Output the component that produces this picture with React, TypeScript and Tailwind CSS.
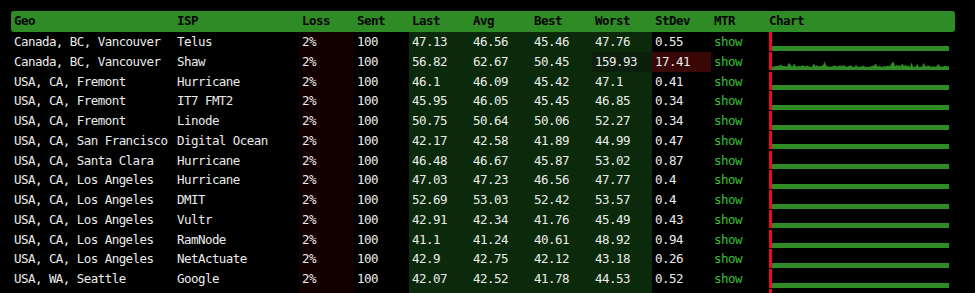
import React from "react";

type Row = {
  geo: string;
  isp: string;
  last: string;
  avg: string;
  best: string;
  worst: string;
  stdev: string;
  spiky?: boolean;
  hidden?: boolean;
};

const rows: Row[] = [
  { geo: "Canada, BC, Vancouver", isp: "Telus", last: "47.13", avg: "46.56", best: "45.46", worst: "47.76", stdev: "0.55" },
  { geo: "Canada, BC, Vancouver", isp: "Shaw", last: "56.82", avg: "62.67", best: "50.45", worst: "159.93", stdev: "17.41", spiky: true },
  { geo: "USA, CA, Fremont", isp: "Hurricane", last: "46.1", avg: "46.09", best: "45.42", worst: "47.1", stdev: "0.41" },
  { geo: "USA, CA, Fremont", isp: "IT7 FMT2", last: "45.95", avg: "46.05", best: "45.45", worst: "46.85", stdev: "0.34" },
  { geo: "USA, CA, Fremont", isp: "Linode", last: "50.75", avg: "50.64", best: "50.06", worst: "52.27", stdev: "0.34" },
  { geo: "USA, CA, San Francisco", isp: "Digital Ocean", last: "42.17", avg: "42.58", best: "41.89", worst: "44.99", stdev: "0.47" },
  { geo: "USA, CA, Santa Clara", isp: "Hurricane", last: "46.48", avg: "46.67", best: "45.87", worst: "53.02", stdev: "0.87" },
  { geo: "USA, CA, Los Angeles", isp: "Hurricane", last: "47.03", avg: "47.23", best: "46.56", worst: "47.77", stdev: "0.4" },
  { geo: "USA, CA, Los Angeles", isp: "DMIT", last: "52.69", avg: "53.03", best: "52.42", worst: "53.57", stdev: "0.4" },
  { geo: "USA, CA, Los Angeles", isp: "Vultr", last: "42.91", avg: "42.34", best: "41.76", worst: "45.49", stdev: "0.43" },
  { geo: "USA, CA, Los Angeles", isp: "RamNode", last: "41.1", avg: "41.24", best: "40.61", worst: "48.92", stdev: "0.94" },
  { geo: "USA, CA, Los Angeles", isp: "NetActuate", last: "42.9", avg: "42.75", best: "42.12", worst: "43.18", stdev: "0.26" },
  { geo: "USA, WA, Seattle", isp: "Google", last: "42.07", avg: "42.52", best: "41.78", worst: "44.53", stdev: "0.52" },
  { geo: "", isp: "", last: "", avg: "", best: "", worst: "", stdev: "", hidden: true },
];

const cols = "grid grid-cols-[163px_125px_55px_55px_61px_61px_61px_60px_59px_55px_189px]";

function spikyPoints(): string {
  const w = 177;
  const base = 6;
  let seed = 7;
  const rnd = () => {
    seed = (seed * 9301 + 49297) % 233280;
    return seed / 233280;
  };
  const pts: string[] = [`0,10`];
  for (let x = 0; x <= w; x += 1.5) {
    let h = base + rnd() * 1.6;
    const r = rnd();
    if (r > 0.9) h += 2 + rnd() * 2.5;
    else if (r > 0.75) h += 1;
    if (Math.abs(x - 104) < 1) h = 9.5;
    if (Math.abs(x - 9) < 1) h = 8.5;
    pts.push(`${x.toFixed(1)},${(10 - h + 3).toFixed(1)}`);
  }
  pts.push(`${w},10`);
  return pts.join(" ");
}

const spiky = spikyPoints();

function Chart({ spikyRow }: { spikyRow?: boolean }) {
  return (
    <div className="flex h-full items-start pl-[2.7px]">
      <div className="w-[3px] h-[18.7px] bg-[#ee0a1e]" />
      <div className="w-[177px] h-[18.7px] flex items-end">
        {spikyRow ? (
          <svg width="177" height="10" viewBox="0 0 177 10" className="block">
            <polygon points={spiky} fill="#2e8b26" />
          </svg>
        ) : (
          <div className="w-full h-[5px] bg-[#2e8b26]" />
        )}
      </div>
    </div>
  );
}

export default function App() {
  return (
    <div
      className="w-[975px] h-[293px] overflow-hidden bg-black text-[#ececec] text-[12.5px] tracking-[-0.55px]"
      style={{ fontFamily: '"DejaVu Sans Mono", "Liberation Mono", monospace' }}
    >
      <div className="pl-[11px] pt-[11px]">
        <div className={`${cols} w-[944px] h-[21px] items-center rounded-[3px] bg-[#2e8b26] text-[#050505] font-bold`}>
          <div className="pl-[3px]">Geo</div>
          <div className="pl-[3px]">ISP</div>
          <div className="pl-[3px]">Loss</div>
          <div className="pl-[3px]">Sent</div>
          <div className="pl-[3px]">Last</div>
          <div className="pl-[3px]">Avg</div>
          <div className="pl-[3px]">Best</div>
          <div className="pl-[3px]">Worst</div>
          <div className="pl-[3px]">StDev</div>
          <div className="pl-[3px]">MTR</div>
          <div className="pl-[3px]">Chart</div>
        </div>
        {rows.map((r, i) => (
          <div key={i} className={`${cols} w-[944px] h-[19.75px] leading-[19.75px]`}>
            <div className="pl-[3px] whitespace-nowrap">{r.geo}</div>
            <div className="pl-[3px] whitespace-nowrap">{r.isp}</div>
            <div className="pl-[3px] bg-[#120000]">{r.hidden ? "" : "2%"}</div>
            <div className="pl-[3px]">{r.hidden ? "" : "100"}</div>
            <div className="pl-[3px] bg-[#0b2a0b]">{r.last}</div>
            <div className="pl-[3px] bg-[#0b2a0b]">{r.avg}</div>
            <div className="pl-[3px] bg-[#0b2a0b]">{r.best}</div>
            <div className={`pl-[3px] ${r.spiky ? "bg-[#0c1e0c]" : "bg-[#0b2a0b]"}`}>{r.worst}</div>
            <div className={`pl-[3px] ${r.spiky ? "bg-[#3a0707]" : ""}`}>{r.stdev}</div>
            <div className="pl-[3px] text-[#36c036]">{r.hidden ? "" : "show"}</div>
            <Chart spikyRow={r.spiky} />
          </div>
        ))}
      </div>
    </div>
  );
}
